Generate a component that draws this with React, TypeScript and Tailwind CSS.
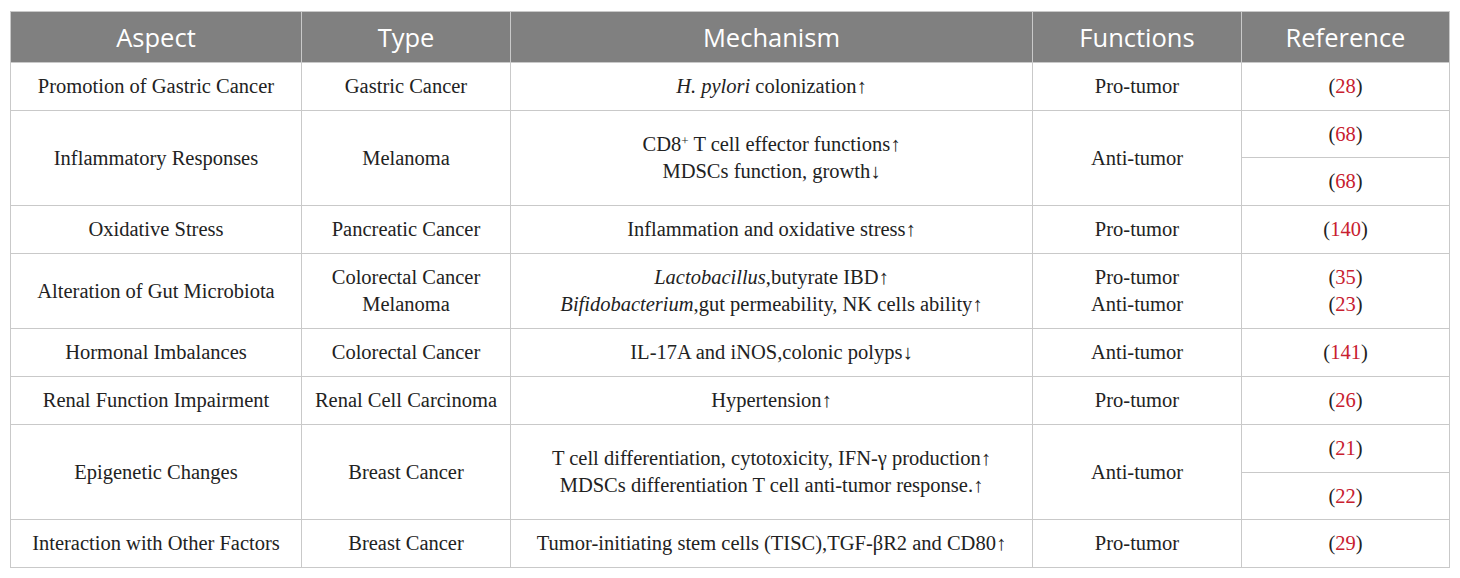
import React from "react";

const cell = "border border-[#c9c9c9] text-center align-middle px-1";
const serif = { fontFamily: '"Liberation Serif", "DejaVu Serif", serif' };

const Ref: React.FC<{ n: string }> = ({ n }) => (
  <span>
    (<span className="text-[#c8202f]">{n}</span>)
  </span>
);

export default function App() {
  return (
    <div className="w-[1460px] h-[578px] bg-white pt-[11px] pl-[10px]">
      <table
        className="table-fixed border-collapse w-[1439px] text-[20.5px] leading-[27px] text-[#222]"
        style={serif}
      >
        <colgroup>
          <col className="w-[291px]" />
          <col className="w-[209px]" />
          <col className="w-[522px]" />
          <col className="w-[209px]" />
          <col className="w-[208px]" />
        </colgroup>
        <thead>
          <tr
            className="h-[51px] bg-[#808080] text-white text-[25.5px]"
            style={{ fontFamily: '"Open Sans", "Noto Sans", sans-serif' }}
          >
            <th className={`${cell} font-normal`}>Aspect</th>
            <th className={`${cell} font-normal`}>Type</th>
            <th className={`${cell} font-normal`}>Mechanism</th>
            <th className={`${cell} font-normal`}>Functions</th>
            <th className={`${cell} font-normal`}>Reference</th>
          </tr>
        </thead>
        <tbody>
          <tr className="h-[48px]">
            <td className={cell}>Promotion of Gastric Cancer</td>
            <td className={cell}>Gastric Cancer</td>
            <td className={cell}>
              <i>H. pylori</i> colonization↑
            </td>
            <td className={cell}>Pro-tumor</td>
            <td className={cell}>
              <Ref n="28" />
            </td>
          </tr>
          <tr className="h-[47px]">
            <td className={cell} rowSpan={2}>Inflammatory Responses</td>
            <td className={cell} rowSpan={2}>Melanoma</td>
            <td className={cell} rowSpan={2}>
              <div>
                CD8<sup className="text-[13px]">+</sup> T cell effector functions↑
              </div>
              <div>MDSCs function, growth↓</div>
            </td>
            <td className={cell} rowSpan={2}>Anti-tumor</td>
            <td className={cell}>
              <Ref n="68" />
            </td>
          </tr>
          <tr className="h-[48px]">
            <td className={cell}>
              <Ref n="68" />
            </td>
          </tr>
          <tr className="h-[48px]">
            <td className={cell}>Oxidative Stress</td>
            <td className={cell}>Pancreatic Cancer</td>
            <td className={cell}>Inflammation and oxidative stress↑</td>
            <td className={cell}>Pro-tumor</td>
            <td className={cell}>
              <Ref n="140" />
            </td>
          </tr>
          <tr className="h-[75px]">
            <td className={cell}>Alteration of Gut Microbiota</td>
            <td className={cell}>
              <div>Colorectal Cancer</div>
              <div>Melanoma</div>
            </td>
            <td className={cell}>
              <div>
                <i>Lactobacillus</i>,butyrate IBD↑
              </div>
              <div>
                <i>Bifidobacterium</i>,gut permeability, NK cells ability↑
              </div>
            </td>
            <td className={cell}>
              <div>Pro-tumor</div>
              <div>Anti-tumor</div>
            </td>
            <td className={cell}>
              <div>
                <Ref n="35" />
              </div>
              <div>
                <Ref n="23" />
              </div>
            </td>
          </tr>
          <tr className="h-[48px]">
            <td className={cell}>Hormonal Imbalances</td>
            <td className={cell}>Colorectal Cancer</td>
            <td className={cell}>IL-17A and iNOS,colonic polyps↓</td>
            <td className={cell}>Anti-tumor</td>
            <td className={cell}>
              <Ref n="141" />
            </td>
          </tr>
          <tr className="h-[48px]">
            <td className={cell}>Renal Function Impairment</td>
            <td className={cell}>Renal Cell Carcinoma</td>
            <td className={cell}>Hypertension↑</td>
            <td className={cell}>Pro-tumor</td>
            <td className={cell}>
              <Ref n="26" />
            </td>
          </tr>
          <tr className="h-[48px]">
            <td className={cell} rowSpan={2}>Epigenetic Changes</td>
            <td className={cell} rowSpan={2}>Breast Cancer</td>
            <td className={cell} rowSpan={2}>
              <div>T cell differentiation, cytotoxicity, IFN-γ production↑</div>
              <div>MDSCs differentiation T cell anti-tumor response.↑</div>
            </td>
            <td className={cell} rowSpan={2}>Anti-tumor</td>
            <td className={cell}>
              <Ref n="21" />
            </td>
          </tr>
          <tr className="h-[47px]">
            <td className={cell}>
              <Ref n="22" />
            </td>
          </tr>
          <tr className="h-[48px]">
            <td className={cell}>Interaction with Other Factors</td>
            <td className={cell}>Breast Cancer</td>
            <td className={cell}>
              Tumor-initiating stem cells (TISC),TGF-βR2 and CD80↑
            </td>
            <td className={cell}>Pro-tumor</td>
            <td className={cell}>
              <Ref n="29" />
            </td>
          </tr>
        </tbody>
      </table>
    </div>
  );
}
